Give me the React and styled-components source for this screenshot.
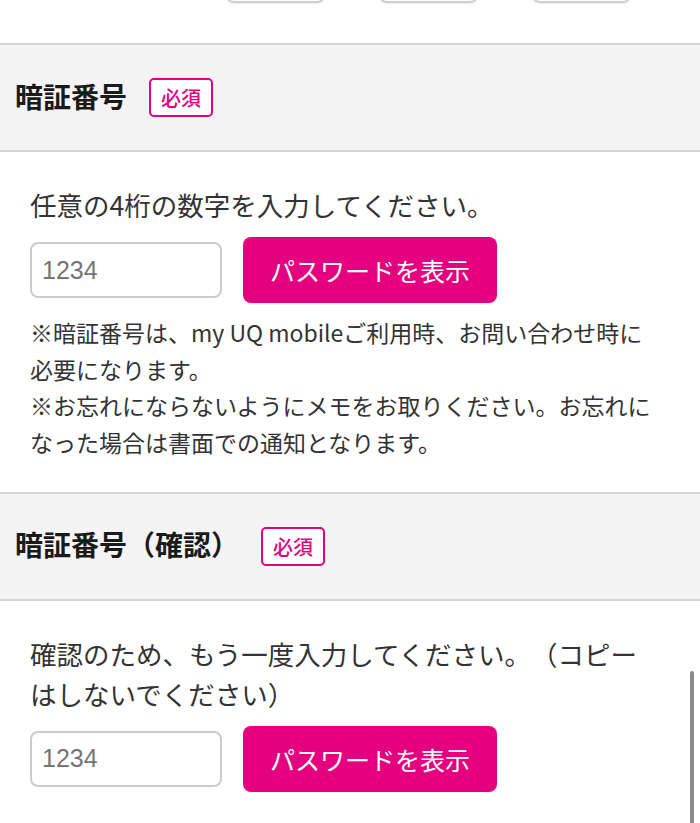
import React, { useState } from "react";
import styled, { createGlobalStyle } from "styled-components";

const GlobalStyle = createGlobalStyle`
  html, body {
    margin: 0;
    padding: 0;
    background: #ffffff;
  }
  body {
    font-family: "Noto Sans CJK JP", "Noto Sans", sans-serif;
    color: #333333;
    overflow: hidden;
    text-spacing-trim: space-all;
    line-break: strict;
  }
`;

const sections = [
  {
    id: "pin",
    title: "暗証番号",
    lead: "任意の4桁の数字を入力してください。",
    notes: [
      "※暗証番号は、my UQ mobileご利用時、お問い合わせ時に必要になります。",
      "※お忘れにならないようにメモをお取りください。お忘れになった場合は書面での通知となります。",
    ],
  },
  {
    id: "pinConfirm",
    title: "暗証番号（確認）",
    lead: "確認のため、もう一度入力してください。（コピーはしないでください）",
    notes: [],
  },
];

const PinField = ({ value, onChange, shown, onToggle }) => (
  <FieldRow>
    <PinInput
      type={shown ? "text" : "password"}
      inputMode="numeric"
      maxLength={4}
      placeholder="1234"
      value={value}
      onChange={onChange}
    />
    <ShowButton type="button" onClick={onToggle}>
      {shown ? "パスワードを隠す" : "パスワードを表示"}
    </ShowButton>
  </FieldRow>
);

export default function App() {
  const [values, setValues] = useState({ pin: "", pinConfirm: "" });
  const [shown, setShown] = useState({ pin: false, pinConfirm: false });

  return (
    <Page>
      <GlobalStyle />
      <TopStrip>
        <ChoiceButton />
        <ChoiceButton />
        <ChoiceButton />
      </TopStrip>

      {sections.map((s) => (
        <Section key={s.id}>
          <SectionHeader>
            <SectionTitle>{s.title}</SectionTitle>
            <RequiredBadge>必須</RequiredBadge>
          </SectionHeader>
          <SectionBody>
            <Lead>{s.lead}</Lead>
            <PinField
              value={values[s.id]}
              onChange={(e) =>
                setValues({ ...values, [s.id]: e.target.value })
              }
              shown={shown[s.id]}
              onToggle={() => setShown({ ...shown, [s.id]: !shown[s.id] })}
            />
            {s.notes.length > 0 ? (
              <Notes>
                {s.notes.map((n, i) => (
                  <Note key={i}>{n}</Note>
                ))}
              </Notes>
            ) : null}
          </SectionBody>
        </Section>
      ))}

      <ScrollThumb />
    </Page>
  );
}

const Page = styled.div`
  width: 700px;
  min-height: 823px;
  background: #ffffff;
`;

const TopStrip = styled.div`
  height: 43px;
  display: flex;
  gap: 54px;
  padding-left: 226px;
  box-sizing: border-box;
  overflow: hidden;
`;

const ChoiceButton = styled.div`
  width: 99px;
  height: 40px;
  margin-top: -38px;
  box-sizing: border-box;
  border: 1px solid #cfcfcf;
  border-radius: 8px;
  background: #ffffff;
  box-shadow: 0 1px 2px rgba(0, 0, 0, 0.25);
`;

const Section = styled.section`
  display: flex;
  flex-direction: column;
`;

const SectionHeader = styled.div`
  height: 109px;
  box-sizing: border-box;
  display: flex;
  align-items: center;
  padding-left: 15px;
  padding-bottom: 4px;
  background: #f4f4f4;
  border-top: 2px solid #d4d4d4;
  border-bottom: 2px solid #d4d4d4;
`;

const SectionTitle = styled.h2`
  margin: 0;
  font-size: 28px;
  font-weight: bold;
  color: #1a1a1a;
`;

const RequiredBadge = styled.span`
  margin-left: 22px;
  margin-top: 4px;
  width: 64px;
  height: 39px;
  box-sizing: border-box;
  display: flex;
  align-items: center;
  justify-content: center;
  border: 2px solid #e4007f;
  border-radius: 5px;
  background: #ffffff;
  color: #e4007f;
  font-size: 20px;
  font-weight: 500;
`;

const SectionBody = styled.div`
  padding: 33px 45px 31px 30px;
`;

const Lead = styled.p`
  margin: 0;
  font-size: 26.5px;
  line-height: 40px;
  color: #333333;
`;

const FieldRow = styled.div`
  margin-top: 12px;
  display: flex;
  align-items: center;
  gap: 21px;
`;

const PinInput = styled.input`
  width: 192px;
  height: 56px;
  box-sizing: border-box;
  padding: 0 10px;
  border: 2px solid #cccccc;
  border-radius: 8px;
  outline: none;
  font-family: "Liberation Sans", "Noto Sans", sans-serif;
  font-size: 25px;
  color: #333333;
  background: #ffffff;

  ::placeholder {
    color: #b3b3b3;
  }
`;

const ShowButton = styled.button`
  width: 254px;
  height: 66px;
  border: none;
  border-radius: 8px;
  background: #e4007f;
  color: #ffffff;
  font-family: "Noto Sans CJK JP", "Noto Sans", sans-serif;
  font-size: 25px;
  cursor: pointer;
`;

const Notes = styled.div`
  margin-top: 11px;
`;

const Note = styled.p`
  margin: 0;
  font-size: 23px;
  line-height: 36.7px;
  color: #333333;
`;

const ScrollThumb = styled.div`
  position: fixed;
  right: 6px;
  top: 671px;
  width: 4px;
  height: 160px;
  border-radius: 2px;
  background: #8a8a8a;
`;
